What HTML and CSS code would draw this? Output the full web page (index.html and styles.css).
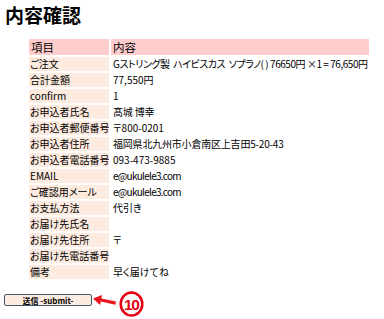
FILE: index.html
```html
<!DOCTYPE html>
<html lang="ja">
<head>
<meta charset="utf-8">
<title>内容確認</title>
<link rel="stylesheet" href="styles.css">
</head>
<body>
<div class="page">
  <h1 class="title">内容確認</h1>
  <table class="confirm">
    <colgroup><col class="c-label"><col class="c-value"></colgroup>
    <thead>
      <tr><th>項目</th><th>内容</th></tr>
    </thead>
    <tbody>
      <tr><td class="lbl">ご注文</td><td class="order">Gストリング製&nbsp;&nbsp;ハイビスカス&nbsp;&nbsp;ソプラノ( ) 76650円 ×1 = 76,650円</td></tr>
      <tr><td class="lbl">合計金額</td><td>77,550円</td></tr>
      <tr><td class="lbl">confirm</td><td>1</td></tr>
      <tr><td class="lbl">お申込者氏名</td><td class="kanji">髙城&nbsp;博幸</td></tr>
      <tr><td class="lbl">お申込者郵便番号</td><td>〒800-0201</td></tr>
      <tr><td class="lbl">お申込者住所</td><td class="kanji">福岡県北九州市小倉南区上吉田5-20-43</td></tr>
      <tr><td class="lbl">お申込者電話番号</td><td>093-473-9885</td></tr>
      <tr><td class="lbl">EMAIL</td><td class="email">e@ukulele3.com</td></tr>
      <tr><td class="lbl">ご確認用メール</td><td class="email">e@ukulele3.com</td></tr>
      <tr><td class="lbl">お支払方法</td><td>代引き</td></tr>
      <tr><td class="lbl">お届け先氏名</td><td></td></tr>
      <tr><td class="lbl">お届け先住所</td><td>〒</td></tr>
      <tr><td class="lbl">お届け先電話番号</td><td></td></tr>
      <tr><td class="lbl">備考</td><td>早く届けてね</td></tr>
    </tbody>
  </table>
  <div class="actions">
    <button class="submit" type="button">送信 -submit-</button>
    <svg class="arrow" width="24" height="12" viewBox="0 0 24 12">
      <polygon points="0,3.5 9,0 8.4,3.4 23,6.6 22.3,9.8 7.8,6.6 7,10" fill="#e8141e"/>
    </svg>
    <svg class="num" width="25" height="26" viewBox="0 0 25 26">
      <ellipse cx="12.5" cy="13" rx="10.8" ry="11.6" fill="none" stroke="#e60012" stroke-width="2.5"/>
      <text x="12.3" y="19" text-anchor="middle" class="num-text">10</text>
    </svg>
  </div>
</div>
</body>
</html>
```

FILE: styles.css
```css
html, body {
  margin: 0;
  padding: 0;
  background: #ffffff;
}

body {
  font-family: "Noto Sans CJK JP", "Noto Sans", sans-serif;
  color: #000000;
  font-feature-settings: "palt";
}

.page {
  padding: 5px 0 0 0;
}

.title {
  margin: 0 0 0 5px;
  font-size: 19px;
  line-height: 19px;
  font-weight: bold;
  height: 19px;
}

.confirm {
  margin: 13px 0 0 27px;
  border-collapse: separate;
  border-spacing: 2px;
  table-layout: fixed;
  width: 344px;
}

.c-label { width: 80px; }
.c-value { width: 258px; }

.confirm th {
  background: #ffcccc;
  height: 16px;
  padding: 0 0 0 2px;
  font-size: 11.5px;
  line-height: 16px;
  font-weight: normal;
  text-align: left;
  vertical-align: middle;
}

.confirm td {
  height: 14px;
  padding: 0 0 0 2px;
  font-size: 10px;
  line-height: 14px;
  vertical-align: middle;
  white-space: nowrap;
  overflow: hidden;
}

.confirm td.lbl {
  background: #fdebdf;
  padding-left: 1px;
}

.confirm td.order {
  letter-spacing: -0.45px;
}

.confirm td.kanji {
  font-feature-settings: normal;
  letter-spacing: -0.2px;
}

.confirm td.email {
  letter-spacing: -0.7px;
}

.actions {
  display: flex;
  align-items: flex-start;
  margin: 13px 0 0 4px;
}

.submit {
  width: 88px;
  height: 12px;
  padding: 0;
  border: 1.5px solid #3b5670;
  border-radius: 2px;
  background: #fcebdf;
  font-family: "Noto Sans CJK JP", sans-serif;
  font-size: 8px;
  line-height: 9px;
  font-weight: bold;
  color: #000;
  display: flex;
  align-items: center;
  justify-content: center;
}

.arrow {
  margin: 1px 0 0 1px;
}

.num {
  margin: -3px 0 0 2px;
}

.num-text {
  font-family: "Liberation Sans", sans-serif;
  font-size: 15.5px;
  font-weight: bold;
  fill: #e60012;
  letter-spacing: -1.2px;
}
```
